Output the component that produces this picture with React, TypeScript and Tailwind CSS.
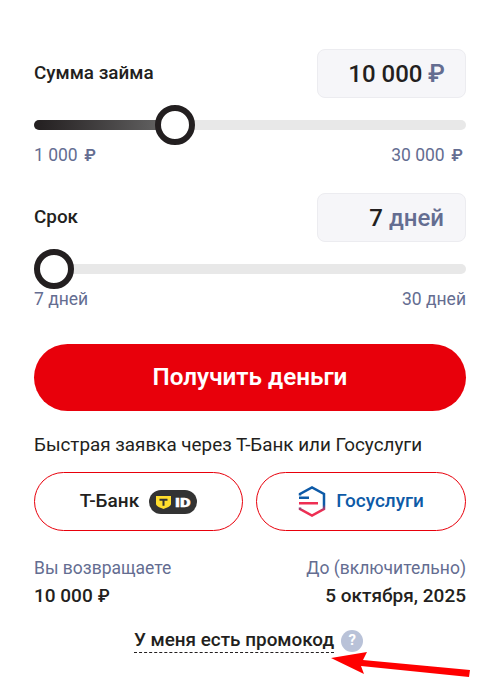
function Rub({ className }: { className?: string }) {
    return <span className={`font-['Inter',sans-serif] font-semibold ${className ?? ""}`}>₽</span>
}

function Slider({ thumb, fill, from, to }: { thumb: string; fill: string; from: React.ReactNode; to: React.ReactNode }) {
    return (
        <div>
            <div className="relative h-[10px] rounded-full bg-[#e8e8e8]">
                <div className={`h-full rounded-full bg-gradient-to-r from-[#231f20] to-[#6a6a6a] ${fill}`} />
                <div className={`absolute top-1/2 -translate-y-1/2 -translate-x-1/2 w-10 h-10 rounded-full bg-white border-[6px] border-[#231f20] ${thumb}`} />
            </div>
            <div className="flex justify-between mt-[15px] text-[17.500px] leading-5 text-[#646d91]">
                <span>{from}</span>
                <span>{to}</span>
            </div>
        </div>
    )
}

function ValueBox({ children }: { children: React.ReactNode }) {
    return (
        <div className="w-[149px] h-[49px] rounded-lg bg-[#f6f6f9] border border-[#ececf0] flex items-center justify-end gap-[6px] pr-[21px] text-[24px] font-medium">
            {children}
        </div>
    )
}

function TId() {
    return (
        <svg width="48" height="24" viewBox="0 0 48 24">
            <rect width="48" height="24" rx="12" fill="#333333" />
            <path d="M7 6h15v8c0 2-4.500 4-7.500 5-3-1-7.500-3-7.500-5z" fill="#ffdd2d" />
            <path d="M10.500 8.800h8v2h-3v5h-2v-5h-3z" fill="#333333" />
            <text x="26" y="17" fontSize="12.500" fontWeight="900" fill="#ffffff" stroke="#ffffff" strokeWidth="0.400" textLength="15.500" lengthAdjust="spacingAndGlyphs" fontFamily="Roboto, sans-serif">ID</text>
        </svg>
    )
}

function GosLogo() {
    return (
        <svg width="28" height="31" viewBox="0 0 28 31" fill="none">
            <defs>
                <linearGradient id="gos" gradientUnits="userSpaceOnUse" x1="0" y1="0" x2="0" y2="31">
                    <stop offset="0.6" stopColor="#0d5aa7" />
                    <stop offset="0.8" stopColor="#ee2f53" />
                </linearGradient>
            </defs>
            <path d="M2 9.500V8L14 1.500 26 8v15l-12 6.500L2 23v-1.500" stroke="url(#gos)" strokeWidth="2.500" />
            <rect x="1" y="10.500" width="10" height="2.500" fill="#0d5aa7" />
            <rect x="1" y="16" width="19" height="2.500" fill="#ee2f53" />
        </svg>
    )
}

export default function App() {
    return (
        <div className="relative w-[498px] h-[693px] bg-white overflow-hidden pt-[49px] pl-[34px] pr-[32px] font-['Roboto',sans-serif] text-[#231f20]">
            <div className="flex items-center justify-between">
                <span className="text-[18.850px] font-medium">Сумма займа</span>
                <ValueBox>
                    <span>10 000</span>
                    <Rub className="-ml-px -mr-px text-[#646d91]" />
                </ValueBox>
            </div>
            <div className="mt-[22px]">
                <Slider
                    thumb="left-[141px]"
                    fill="w-[141px]"
                    from={<>1 000 <Rub className="ml-[2px] text-[16.500px]" /></>}
                    to={<span className="pr-[3px]">30 000 <Rub className="ml-[2px] text-[16.500px]" /></span>}
                />
            </div>

            <div className="flex items-center justify-between mt-[28px]">
                <span className="text-[18.850px] font-medium">Срок</span>
                <ValueBox>
                    <span>7</span>
                    <span className="text-[#646d91]">дней</span>
                </ValueBox>
            </div>
            <div className="mt-[22px]">
                <Slider thumb="left-[20px]" fill="w-0" from="7 дней" to="30 дней" />
            </div>

            <button className="mt-[35px] w-full h-[67px] rounded-full bg-[#e8000b] text-white text-[24.250px] font-semibold">
                Получить деньги
            </button>

            <p className="mt-[23px] text-[18.850px] leading-[22px]">Быстрая заявка через Т-Банк или Госуслуги</p>

            <div className="flex gap-[13px] mt-[16px]">
                <button className="w-[209px] h-[59px] rounded-full border border-[#e8000b] flex items-center justify-center gap-[10px] text-[19px] font-medium">
                    Т-Банк
                    <TId />
                </button>
                <button className="w-[210px] h-[59px] rounded-full border border-[#e8000b] flex items-center justify-center gap-[10px] text-[19px] font-medium text-[#0d5aa7]">
                    <GosLogo />
                    Госуслуги
                </button>
            </div>

            <div className="flex justify-between mt-[27px] text-[#646d91] text-[17.500px] leading-5">
                <span>Вы возвращаете</span>
                <span>До (включительно)</span>
            </div>
            <div className="flex justify-between mt-[7px] text-[19px] leading-[22px] font-medium">
                <span>10 000 <Rub className="text-[17px]" /></span>
                <span>5 октября, 2025</span>
            </div>

            <div className="flex justify-center items-center gap-[7px] mt-[21px] pr-[3px]">
                <span className="text-[18.900px] leading-[24px] font-medium border-b border-dashed border-[#231f20]">У меня есть промокод</span>
                <span className="w-[22px] h-[22px] rounded-full bg-[#b9c2d8] text-white text-[15px] font-bold flex items-center justify-center">?</span>
            </div>

            <svg className="absolute left-[325px] top-[645px]" width="150" height="40" viewBox="0 0 150 40">
                <path d="M6 13L42 7 38 15 145 25 144 32 36 21 39 29z" fill="#ff0000" />
            </svg>
        </div>
    )
}
